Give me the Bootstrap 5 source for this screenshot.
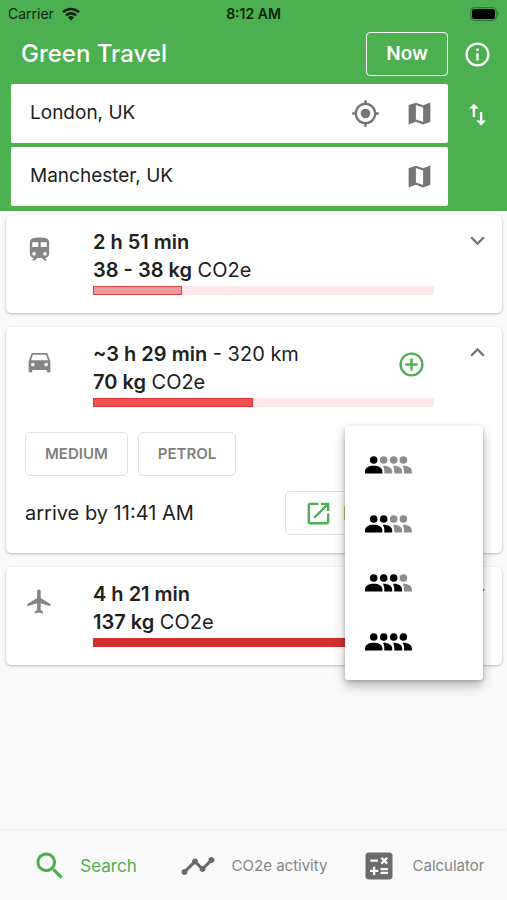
<!DOCTYPE html>
<html lang="en">
<head>
<meta charset="utf-8">
<meta name="viewport" content="width=device-width, initial-scale=1">
<title>Green Travel</title>
<link href="https://cdn.jsdelivr.net/npm/bootstrap@5.3.0/dist/css/bootstrap.min.css" rel="stylesheet">
<style>
:root { --green: #4caf50; --ink: #212121; --icon: #757575; }
body { font-family: Inter, "Liberation Sans", sans-serif; background: #fafafa; color: var(--ink); font-size: 20px; line-height: 28px; }
svg { display: block; fill: currentColor; flex: none; }
.plain-btn { border: 0; background: none; padding: 0; color: inherit; }
.app-head { background: var(--green); padding-bottom: 5px; }
.status { color: #0b260c; font-size: 14px; line-height: 27px; padding: 0 8px; }
.status > * { flex: 1 1 0; }
.status-time { font-weight: 600; }
.app-title { font-size: 24px; line-height: 28px; font-weight: 500; }
.title-row { height: 57px; padding-left: 21px; padding-bottom: 3px; }
.side { width: 59px; flex: none; }
.now-btn { --bs-btn-color: #fff; --bs-btn-border-color: #fff; font-size: 19px; font-weight: 600; line-height: 28px; padding: 7px 19px; border-radius: 4px; }
.place { background: #fff; border-radius: 2px; height: 59px; padding: 0 14px 0 19px; color: var(--icon); gap: 25px; }
.place input { font-size: 19px; color: var(--ink); padding: 0; border: 0; box-shadow: none; background: none; min-width: 0; }
.places { padding-left: 11px; gap: 4px; }
.trips { padding: 4px 5px 20px 6px; gap: 14px; }
.trip { border: 0; border-radius: 5px; box-shadow: 0 1px 3px rgba(0,0,0,.26); padding: 13px 10px 18px 19px; }
.trip-icon { width: 68px; flex: none; color: #858585; padding-top: 7px; }
.trip-tail { width: 58px; flex: none; color: var(--icon); }
.trip-tail svg { margin-top: -2px; }
.strong { font-weight: 600; }
.meter { height: 9px; margin-top: 2px; border-radius: 0; background: #ffe6ea; }
.meter .progress-bar { border: 1px solid #c62828; }
.lv-low { background: #ef9a9a; border-color: #d84343 !important; }
.lv-mid { background: #ef5350; border-color: #d63434 !important; }
.lv-high { background: #d32f2f; border-color: #d32f2f !important; }
.opt-btn { --bs-btn-color: #808080; --bs-btn-border-color: #e0e0e0; font-size: 15px; font-weight: 600; line-height: 22px; padding: 10px 19px; border-radius: 5px; }
.dir-btn { --bs-btn-color: var(--green); --bs-btn-border-color: #e0e0e0; width: 198px; height: 44px; padding: 0 18px; border-radius: 5px; gap: 10px; font-size: 18px; font-weight: 600; }
.opts { gap: 10px; margin-top: 25px; }
.arrive { margin-top: 15px; margin-right: 9px; }
.seats { display: block; min-width: 138px; top: 99px; right: 19px; padding: 9px 0; border: 0; border-radius: 3px; box-shadow: 0 6px 12px rgba(0,0,0,.26), 0 1px 4px rgba(0,0,0,.2); }
.seats .dropdown-item { height: 59px; padding: 0 20px; color: #000; }
.tabs { background: #fafafa; height: 69px; box-shadow: 0 -1px 3px rgba(0,0,0,.06); }
.tabs a { color: #858585; text-decoration: none; font-size: 15px; gap: 16px; white-space: nowrap; }
.tabs svg { color: #6b6b6b; }
.tabs a.active, .tabs a.active svg { color: var(--green); }
.tabs a.active { font-size: 17px; gap: 12px; }
.faded { fill: #8c8c8c; }
</style>
</head>
<body class="d-flex flex-column min-vh-100">
<svg width="0" height="0" class="position-absolute" aria-hidden="true">
  <defs>
    <g id="head-front"><circle cx="8.700" cy="4" r="3.800"/><path d="M0 17.500V15.500C0 11.700 4 9.800 8.700 9.800S17.400 11.700 17.400 15.500V17.500Z"/></g>
    <g id="head-back"><circle cx="8.700" cy="4" r="3.800"/><path d="M8 9.900C12.500 9.600 17.200 11.800 17.200 15.500V17.500H9.300V15.500C9.300 13 9 11.500 8 9.900Z"/></g>
    <path id="map" d="M20.500 3l-.16.030L15 5.100 9 3 3.360 4.900c-.21.070-.36.250-.36.480V20.500c0 .280.220.500.500.500l.16-.030L9 18.900l6 2.100 5.640-1.900c.21-.070.360-.250.360-.480V3.500c0-.280-.220-.500-.500-.500zM15 19l-6-2.110V5l6 2.110V19z"/>
    <path id="down" d="M7.410 8.590L12 13.170l4.590-4.580L18 10l-6 6-6-6z"/>
  </defs>
</svg>

<header class="app-head text-white">
  <div class="status d-flex align-items-center">
    <div class="d-flex align-items-center gap-2"><span>Carrier</span>
      <svg width="18" height="14" viewBox="0 0 18 14" aria-hidden="true"><g fill="none" stroke="currentColor" stroke-width="2.600"><path d="M1 5.200A11.500 11.500 0 0 1 17 5.200"/><path d="M4 8.400A7.200 7.200 0 0 1 14 8.400"/></g><path d="M9 13.500L6 10.500A4.300 4.300 0 0 1 12 10.500Z"/></svg>
    </div>
    <span class="status-time text-center">8:12 AM</span>
    <div class="d-flex justify-content-end"><svg width="29" height="14" viewBox="0 0 29 14" aria-hidden="true"><rect x=".7" y=".7" width="25.600" height="12.600" rx="3.800" fill="none" stroke="#2f7a32" stroke-width="1.200"/><rect x="2" y="2" width="23" height="10" rx="2.500" fill="#000"/><path d="M27.300 4.800Q29 5.500 29 7T27.300 9.200Z" fill="#2f7a32"/></svg></div>
  </div>
  <div class="title-row d-flex align-items-center">
    <h1 class="app-title m-0 me-auto">Green Travel</h1>
    <button type="button" class="btn now-btn">Now</button>
    <div class="side d-flex justify-content-center">
      <button type="button" class="plain-btn" aria-label="About"><svg width="29" height="29" viewBox="0 0 24 24"><path d="M11 7h2v2h-2zm0 4h2v6h-2zm1-9C6.480 2 2 6.480 2 12s4.480 10 10 10 10-4.480 10-10S17.520 2 12 2zm0 18c-4.410 0-8-3.590-8-8s3.590-8 8-8 8 3.590 8 8-3.590 8-8 8z"/></svg></button>
    </div>
  </div>
  <div class="d-flex">
    <div class="places d-flex flex-column flex-fill">
      <div class="place d-flex align-items-center">
        <input class="form-control flex-fill" type="text" value="London, UK" aria-label="From">
        <button type="button" class="plain-btn" aria-label="Use my location"><svg width="29" height="29" viewBox="0 0 24 24"><circle cx="12" cy="12" r="4"/><path d="M20.940 11c-.46-4.170-3.770-7.480-7.940-7.940V1h-2v2.060C6.830 3.520 3.520 6.830 3.060 11H1v2h2.060c.46 4.170 3.770 7.480 7.940 7.940V23h2v-2.060c4.170-.46 7.480-3.770 7.940-7.940H23v-2h-2.060zM12 19c-3.870 0-7-3.130-7-7s3.130-7 7-7 7 3.130 7 7-3.130 7-7 7z"/></svg></button>
        <button type="button" class="plain-btn" aria-label="Choose start on map"><svg width="29" height="29" viewBox="0 0 24 24"><use href="#map"/></svg></button>
      </div>
      <div class="place d-flex align-items-center">
        <input class="form-control flex-fill" type="text" value="Manchester, UK" aria-label="To">
        <button type="button" class="plain-btn" aria-label="Choose destination on map"><svg width="29" height="29" viewBox="0 0 24 24"><use href="#map"/></svg></button>
      </div>
    </div>
    <div class="side d-flex justify-content-center align-items-start pt-3">
      <button type="button" class="plain-btn" aria-label="Swap places"><svg width="29" height="29" viewBox="0 0 24 24"><path d="M16 17.010V10h-2v7.010h-3L15 21l4-3.990h-3zM9 3L5 6.990h3V14h2V6.990h3L9 3z"/></svg></button>
    </div>
  </div>
</header>

<main class="trips d-flex flex-column flex-fill">
  <section class="card trip">
    <div class="d-flex">
      <div class="trip-icon"><svg width="29" height="29" viewBox="0 0 24 24" aria-hidden="true"><path d="M12 2c-4 0-8 .5-8 4v9.500C4 17.430 5.570 19 7.500 19L6 20.500v.5h2.230l2-2H14l2 2h2v-.5L16.500 19c1.930 0 3.500-1.570 3.500-3.500V6c0-3.500-3.580-4-8-4zM7.500 17c-.83 0-1.500-.67-1.500-1.500S6.670 14 7.500 14s1.500.67 1.500 1.500S8.330 17 7.500 17zm3.500-7H6V6h5v4zm2 0V6h5v4h-5zm3.500 7c-.83 0-1.500-.67-1.500-1.500s.67-1.500 1.500-1.500 1.500.67 1.500 1.500-.67 1.500-1.500 1.500z"/></svg></div>
      <div class="flex-fill">
        <div class="strong">2 h 51 min</div>
        <div><span class="strong">38 - 38 kg</span> CO2e</div>
        <div class="progress meter"><div class="progress-bar lv-low" style="width:26%"></div></div>
      </div>
      <div class="trip-tail d-flex justify-content-end align-items-start"><button type="button" class="plain-btn" aria-label="Expand train"><svg width="29" height="29" viewBox="0 0 24 24"><use href="#down"/></svg></button></div>
    </div>
  </section>

  <section class="card trip">
    <div class="d-flex">
      <div class="trip-icon"><svg width="29" height="29" viewBox="0 0 24 24" aria-hidden="true"><path d="M18.920 6.010C18.720 5.420 18.160 5 17.500 5h-11c-.66 0-1.210.42-1.420 1.010L3 12v8c0 .55.45 1 1 1h1c.55 0 1-.45 1-1v-1h12v1c0 .55.45 1 1 1h1c.55 0 1-.45 1-1v-8l-2.080-5.990zM6.500 16c-.83 0-1.500-.67-1.500-1.500S5.670 13 6.500 13s1.500.67 1.500 1.500S7.330 16 6.500 16zm11 0c-.83 0-1.500-.67-1.500-1.500s.67-1.500 1.500-1.500 1.500.67 1.500 1.500-.67 1.500-1.500 1.500zM5 11l1.500-4.500h11L19 11H5z"/></svg></div>
      <div class="flex-fill">
        <div class="d-flex align-items-center justify-content-between pe-2">
          <div>
            <div><span class="strong">~3 h 29 min</span> - 320 km</div>
            <div><span class="strong">70 kg</span> CO2e</div>
          </div>
          <button type="button" class="plain-btn pb-2" aria-label="Add trip"><svg width="29" height="29" viewBox="0 0 24 24"><path fill="#4caf50" d="M13 7h-2v4H7v2h4v4h2v-4h4v-2h-4V7zm-1-5C6.480 2 2 6.480 2 12s4.480 10 10 10 10-4.480 10-10S17.520 2 12 2zm0 18c-4.410 0-8-3.590-8-8s3.590-8 8-8 8 3.590 8 8-3.590 8-8 8z"/></svg></button>
        </div>
        <div class="progress meter"><div class="progress-bar lv-mid" style="width:47%"></div></div>
      </div>
      <div class="trip-tail d-flex justify-content-end align-items-start"><button type="button" class="plain-btn" aria-label="Collapse car"><svg width="29" height="29" viewBox="0 0 24 24"><path d="M12 8l-6 6 1.410 1.410L12 10.830l4.590 4.580L18 14z"/></svg></button></div>
    </div>
    <div class="opts d-flex">
      <button type="button" class="btn opt-btn">MEDIUM</button>
      <button type="button" class="btn opt-btn">PETROL</button>
    </div>
    <div class="arrive d-flex align-items-center justify-content-between">
      <span>arrive by 11:41 AM</span>
      <button type="button" class="btn dir-btn d-flex align-items-center"><svg width="29" height="29" viewBox="0 0 24 24" aria-hidden="true"><path d="M19 19H5V5h7V3H5c-1.110 0-2 .9-2 2v14c0 1.100.89 2 2 2h14c1.100 0 2-.9 2-2v-7h-2v7zM14 3v2h3.590l-9.830 9.830 1.410 1.410L19 6.410V10h2V3h-7z"/></svg>Directions</button>
    </div>
    <div class="dropdown-menu seats" aria-label="Number of travellers">
      <button type="button" class="dropdown-item" aria-label="1 person"><svg width="47" height="18" viewBox="0 0 47 18"><use href="#head-front"/><use href="#head-back" x="10" class="faded"/><use href="#head-back" x="20" class="faded"/><use href="#head-back" x="29.700" class="faded"/></svg></button>
      <button type="button" class="dropdown-item" aria-label="2 people"><svg width="47" height="18" viewBox="0 0 47 18"><use href="#head-front"/><use href="#head-back" x="10"/><use href="#head-back" x="20" class="faded"/><use href="#head-back" x="29.700" class="faded"/></svg></button>
      <button type="button" class="dropdown-item" aria-label="3 people"><svg width="47" height="18" viewBox="0 0 47 18"><use href="#head-front"/><use href="#head-back" x="10"/><use href="#head-back" x="20"/><use href="#head-back" x="29.700" class="faded"/></svg></button>
      <button type="button" class="dropdown-item" aria-label="4 people"><svg width="47" height="18" viewBox="0 0 47 18"><use href="#head-front"/><use href="#head-back" x="10"/><use href="#head-back" x="20"/><use href="#head-back" x="29.700"/></svg></button>
    </div>
  </section>

  <section class="card trip">
    <div class="d-flex">
      <div class="trip-icon"><svg width="29" height="29" viewBox="0 0 24 24" aria-hidden="true"><path d="M21 16v-2l-8-5V3.500c0-.83-.67-1.500-1.500-1.500S10 2.670 10 3.500V9l-8 5v2l8-2.500V19l-2 1.500V22l3.500-1 3.500 1v-1.500L13 19v-5.500l8 2.500z"/></svg></div>
      <div class="flex-fill">
        <div class="strong">4 h 21 min</div>
        <div><span class="strong">137 kg</span> CO2e</div>
        <div class="progress meter"><div class="progress-bar lv-high" style="width:100%"></div></div>
      </div>
      <div class="trip-tail d-flex justify-content-end align-items-start"><button type="button" class="plain-btn" aria-label="Expand plane"><svg width="29" height="29" viewBox="0 0 24 24"><use href="#down"/></svg></button></div>
    </div>
  </section>
</main>

<nav class="tabs sticky-bottom" aria-label="Main">
  <div class="row g-0 h-100">
    <a href="#search" class="col active d-flex align-items-center justify-content-center" aria-current="page"><svg width="36" height="36" viewBox="0 0 24 24" aria-hidden="true"><path d="M15.500 14h-.79l-.28-.27C15.410 12.590 16 11.110 16 9.500 16 5.910 13.090 3 9.500 3S3 5.910 3 9.500 5.910 16 9.500 16c1.610 0 3.090-.59 4.230-1.570l.27.28v.79l5 4.990L20.490 19l-4.990-5zm-6 0C7.010 14 5 11.990 5 9.500S7.010 5 9.500 5 14 7.010 14 9.500 11.990 14 9.500 14z"/></svg>Search</a>
    <a href="#activity" class="col d-flex align-items-center justify-content-center"><svg width="36" height="36" viewBox="0 0 24 24" aria-hidden="true"><path d="M23 8c0 1.100-.9 2-2 2-.18 0-.35-.02-.51-.07l-3.560 3.550c.05.16.07.34.07.52 0 1.100-.9 2-2 2s-2-.9-2-2c0-.18.02-.36.07-.52l-2.550-2.550c-.16.05-.34.07-.52.07s-.36-.02-.52-.07l-4.550 4.560c.05.16.07.33.07.51 0 1.100-.9 2-2 2s-2-.9-2-2 .9-2 2-2c.18 0 .35.02.51.07l4.560-4.550C8.020 9.360 8 9.180 8 9c0-1.100.9-2 2-2s2 .9 2 2c0 .18-.02.36-.07.52l2.550 2.550c.16-.05.34-.07.52-.07s.36.02.52.07l3.550-3.560C19.020 8.350 19 8.180 19 8c0-1.100.9-2 2-2s2 .9 2 2z"/></svg>CO2e activity</a>
    <a href="#calculator" class="col d-flex align-items-center justify-content-center"><svg width="36" height="36" viewBox="0 0 24 24" aria-hidden="true"><path d="M19 3H5c-1.100 0-2 .9-2 2v14c0 1.100.9 2 2 2h14c1.100 0 2-.9 2-2V5c0-1.100-.9-2-2-2zm-5.970 4.060L14.090 6l1.410 1.410L16.910 6l1.060 1.060-1.410 1.410 1.410 1.410-1.060 1.060-1.410-1.400-1.410 1.410-1.060-1.060 1.410-1.410-1.410-1.420zM6.250 7.720h5v1.500h-5v-1.500zM11.500 16h-2v2H8v-2H6v-1.500h2v-2h1.500v2h2V16zm6.500 1.250h-5v-1.500h5v1.500zm0-2.500h-5v-1.500h5v1.500z"/></svg>Calculator</a>
  </div>
</nav>
<script src="https://cdn.jsdelivr.net/npm/bootstrap@5.3.0/dist/js/bootstrap.bundle.min.js"></script>
</body>
</html>
